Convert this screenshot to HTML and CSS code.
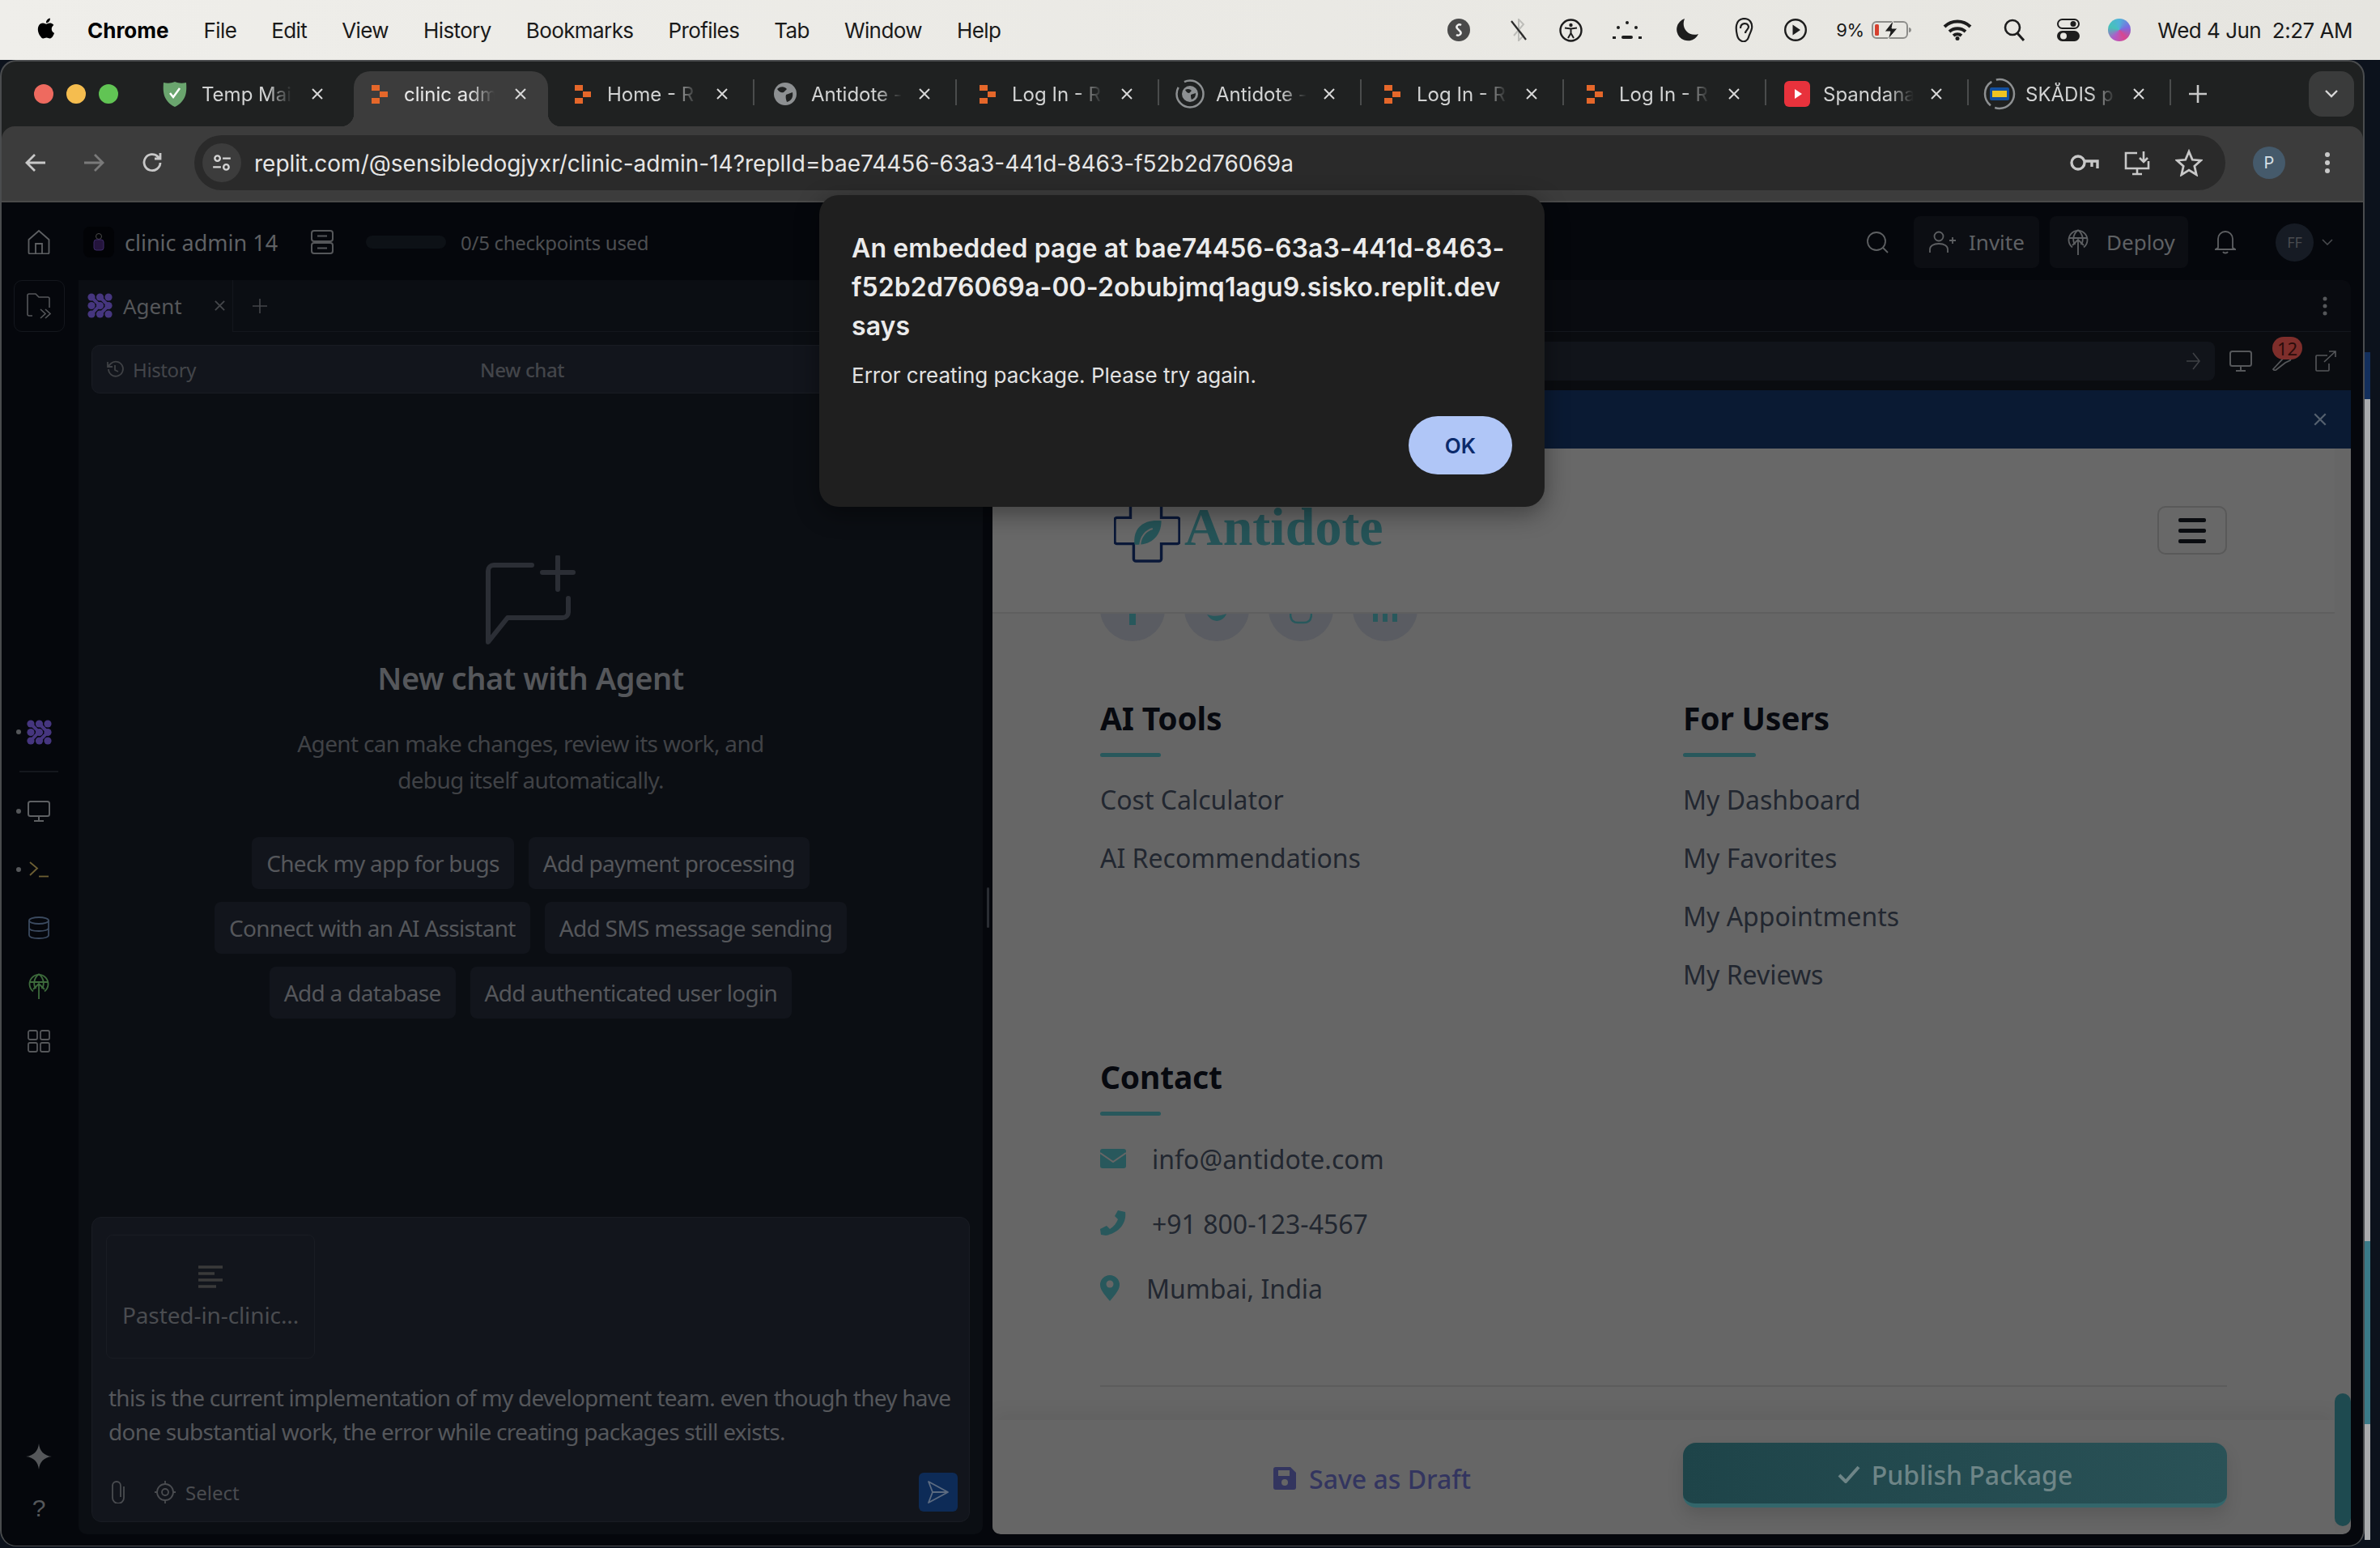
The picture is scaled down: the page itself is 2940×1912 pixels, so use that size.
FILE: index.html
```html
<!DOCTYPE html>
<html>
<head>
<meta charset="utf-8">
<title>clinic admin 14</title>
<link rel="stylesheet" href="styles.css">
</head>
<body>

<svg width="0" height="0" class="defs">
  <symbol id="replit" viewBox="0 0 20 23"><path fill="#e5672a" d="M0 0h10v7H0zM10 8h10v7H10zM0 16h10v7H0z"/></symbol>
  <symbol id="close" viewBox="0 0 16 16"><path d="M2 2l12 12M14 2L2 14" fill="none" stroke="currentColor" stroke-width="2"/></symbol>
  <symbol id="agent" viewBox="0 0 31 31"><g fill="#46367f"><circle cx="5" cy="5" r="4.600"/><circle cx="15.500" cy="5" r="4.600"/><circle cx="26" cy="5" r="4.600"/><circle cx="5" cy="15.500" r="4.600"/><circle cx="15.500" cy="15.500" r="4.600"/><circle cx="26" cy="15.500" r="4.600"/><circle cx="5" cy="26" r="4.600"/><circle cx="15.500" cy="26" r="4.600"/><circle cx="26" cy="26" r="4.600"/></g><path d="M5 5l10 10L5 26M15.500 5L26 15.500 15.500 26" fill="none" stroke="#46367f" stroke-width="4"/></symbol>
  <symbol id="monitor" viewBox="0 0 28 26"><rect x="1" y="1" width="26" height="18" rx="2.500" fill="none" stroke="currentColor" stroke-width="2"/><path d="M14 19v6M8 25h12" fill="none" stroke="currentColor" stroke-width="2"/></symbol>
  <symbol id="deploy" viewBox="0 0 26 32"><g fill="none" stroke="currentColor" stroke-width="1.800"><path d="M6 22.500A11.500 11.500 0 1 1 20 22.500"/><path d="M13 1c-7 6-7 14-3.500 18M13 1c7 6 7 14 3.500 18M2 11h22"/><path d="M13 32V13M6 20l7-7 7 7"/></g></symbol>
</svg>

<header class="menubar">
  <svg class="apple" viewBox="0 0 24 24"><path d="M18.710 19.500c-.83 1.240-1.710 2.450-3.050 2.470-1.340.03-1.770-.79-3.290-.79-1.530 0-2 .77-3.270.82-1.310.05-2.300-1.320-3.140-2.530C4.250 17 2.940 12.450 4.700 9.390c.87-1.520 2.430-2.480 4.120-2.510 1.280-.02 2.500.87 3.290.87.78 0 2.260-1.070 3.810-.91.65.03 2.470.26 3.640 1.980-.09.06-2.170 1.280-2.150 3.810.03 3.020 2.650 4.030 2.680 4.040-.03.07-.42 1.440-1.380 2.830M13 3.500c.73-.83 1.940-1.460 2.940-1.500.13 1.170-.34 2.350-1.040 3.190-.69.85-1.830 1.510-2.950 1.420-.15-1.150.41-2.350 1.050-3.110z"/></svg>
  <nav class="menus">
    <b>Chrome</b><span>File</span><span>Edit</span><span>View</span><span>History</span><span>Bookmarks</span><span>Profiles</span><span>Tab</span><span>Window</span><span>Help</span>
  </nav>
  <div class="status">
    <svg class="st-shazam" viewBox="0 0 28 28"><circle cx="14" cy="14" r="14" fill="#4a4a4a"/><path d="M17 8c-3-2-7 1-5 4l4 4c2 3-2 6-5 4" fill="none" stroke="#eee" stroke-width="2.500"/></svg>
    <svg class="st-bt" viewBox="0 0 26 28"><path d="M7 7l12 14-6 6V1l6 6L7 21" fill="none" stroke="#bdbdb9" stroke-width="2"/><path d="M4 3l18 23" stroke="#2b2b2b" stroke-width="2.200"/></svg>
    <svg class="st-acc" viewBox="0 0 29 29"><circle cx="14.500" cy="14.500" r="13" fill="none" stroke="#1d1d1d" stroke-width="2.400"/><circle cx="14.500" cy="8" r="2.200" fill="#1d1d1d"/><path d="M7 11.500l7.500 1 7.500-1M14.500 12v6l-3.500 6M14.500 18l3.500 6" fill="none" stroke="#1d1d1d" stroke-width="2"/></svg>
    <svg class="st-dots" viewBox="0 0 38 28"><g fill="#1d1d1d"><circle cx="19" cy="5" r="2"/><circle cx="30" cy="11" r="2"/><circle cx="8" cy="11" r="2"/><rect x="1" y="22" width="4" height="3"/><rect x="33" y="22" width="4" height="3"/><rect x="12" y="21" width="14" height="4" rx="2"/></g></svg>
    <svg class="st-moon" viewBox="0 0 28 28"><path d="M11 0a14 14 0 1 0 17 19C16 23 6 12 11 0z" fill="#1d1d1d"/></svg>
    <svg class="st-ear" viewBox="0 0 23 30"><path d="M3 22C1 14 0 2 11 1c8 0 11 6 10 12-1 5-3 7-4 11-1 4-5 6-8 5-3-1-5-3-6-7zM7 13c0-7 9-8 10-2 0 4-4 4-4 8" fill="none" stroke="#1d1d1d" stroke-width="2.200"/></svg>
    <svg class="st-play" viewBox="0 0 28 28"><circle cx="14" cy="14" r="12.800" fill="none" stroke="#1d1d1d" stroke-width="2.400"/><path d="M10.500 7.500l9.500 6.500-9.500 6.500z" fill="#1d1d1d"/></svg>
    <span class="st-pct">9%</span>
    <svg class="st-bat" viewBox="0 0 49 24"><rect x="1" y="2" width="43" height="20" rx="5" fill="none" stroke="#8d8d8a" stroke-width="2"/><rect x="4" y="5" width="5" height="14" rx="1.500" fill="#d6402e"/><path d="M46 9v6c2 0 3-1.500 3-3s-1-3-3-3z" fill="#8d8d8a"/><path d="M27 0L16 14h7l-3 10 12-14h-7z" fill="#1d1d1d" stroke="#e8e7e2"/></svg>
    <svg class="st-wifi" viewBox="0 0 36 26"><path d="M2 9a23 23 0 0 1 32 0M8 15a15 15 0 0 1 20 0M13 20a8 8 0 0 1 10 0" fill="none" stroke="#1d1d1d" stroke-width="4"/><circle cx="18" cy="23.500" r="2.500" fill="#1d1d1d"/></svg>
    <svg class="st-search" viewBox="0 0 26 28"><circle cx="11" cy="11" r="9" fill="none" stroke="#1d1d1d" stroke-width="2.600"/><path d="M17 18l8 9" stroke="#1d1d1d" stroke-width="3"/></svg>
    <svg class="st-ctrl" viewBox="0 0 28 28"><rect x="1" y="1" width="26" height="11" rx="5.500" fill="none" stroke="#1d1d1d" stroke-width="2"/><circle cx="20" cy="6.500" r="3.500" fill="#1d1d1d"/><rect y="15" width="28" height="13" rx="6.500" fill="#1d1d1d"/><circle cx="8" cy="21.500" r="4" fill="#e8e7e2"/></svg>
    <span class="st-siri"></span>
    <span class="st-date">Wed 4 Jun&nbsp;&nbsp;2:27 AM</span>
  </div>
</header>

<main class="desktop">
  <div class="back-window"><i class="bw-blue"></i><i class="bw-grey"></i><i class="bw-teal"></i><i class="bw-grey2"></i></div>

  <section class="window">
    <div class="tabstrip">
      <div class="lights"><i class="red"></i><i class="yellow"></i><i class="green"></i></div>
      <div class="tabs">
        <div class="tab nosep">
          <svg class="fav fav-shield" viewBox="0 0 32 32"><path d="M2 2c5 1 9 1 14-1 5 2 9 2 14 1 1 12 0 23-14 30C2 25 1 14 2 2z" fill="#6aa56e"/><path d="M10 15l4 5 8-11" fill="none" stroke="#fff" stroke-width="2.500"/></svg>
          <span class="tab-text">Temp Mai</span><svg class="tab-x"><use href="#close"/></svg>
        </div>
        <div class="tab active">
          <svg class="fav"><use href="#replit"/></svg>
          <span class="tab-text">clinic adm</span><svg class="tab-x"><use href="#close"/></svg>
        </div>
        <div class="tab">
          <svg class="fav"><use href="#replit"/></svg>
          <span class="tab-text">Home - R</span><svg class="tab-x"><use href="#close"/></svg>
        </div>
        <div class="tab">
          <svg class="fav fav-globe" viewBox="0 0 28 28"><circle cx="14" cy="14" r="14" fill="#8d9092"/><path d="M4 8c5-4 9-3 12 0l-4 4c-3 1-5 0-8-4zM15 15l8-3c1 6-1 10-7 12-1-3-2-6-1-9z" fill="#1f2121"/></svg>
          <span class="tab-text">Antidote -</span><svg class="tab-x"><use href="#close"/></svg>
        </div>
        <div class="tab">
          <svg class="fav"><use href="#replit"/></svg>
          <span class="tab-text">Log In - R</span><svg class="tab-x"><use href="#close"/></svg>
        </div>
        <div class="tab">
          <svg class="fav fav-loading" viewBox="0 0 36 36"><circle cx="18" cy="18" r="16.500" fill="none" stroke="#8d9092" stroke-width="2.500" stroke-dasharray="60 10"/><circle cx="18" cy="18" r="10" fill="#8d9092"/><path d="M12 13c4-2 6-1 8 1l-3 3c-2 0-3-1-5-4zM19 19l6-2c0 4-1 6-5 8-1-2-1-4-1-6z" fill="#1f2121"/></svg>
          <span class="tab-text">Antidote -</span><svg class="tab-x"><use href="#close"/></svg>
        </div>
        <div class="tab">
          <svg class="fav"><use href="#replit"/></svg>
          <span class="tab-text">Log In - R</span><svg class="tab-x"><use href="#close"/></svg>
        </div>
        <div class="tab">
          <svg class="fav"><use href="#replit"/></svg>
          <span class="tab-text">Log In - R</span><svg class="tab-x"><use href="#close"/></svg>
        </div>
        <div class="tab">
          <svg class="fav fav-yt" viewBox="0 0 32 32"><rect width="32" height="32" rx="6" fill="#e8323c"/><path d="M13 10l9 6-9 6z" fill="#fff"/></svg>
          <span class="tab-text">Spandana</span><svg class="tab-x"><use href="#close"/></svg>
        </div>
        <div class="tab">
          <svg class="fav fav-ikea" viewBox="0 0 40 40"><circle cx="20" cy="20" r="18" fill="none" stroke="#8d9092" stroke-width="2.500" stroke-dasharray="34 6"/><rect x="8" y="12" width="24" height="16" rx="2" fill="#14509e"/><rect x="11" y="16" width="18" height="8" fill="#f0c420"/></svg>
          <span class="tab-text">SKÅDIS p</span><svg class="tab-x"><use href="#close"/></svg>
        </div>
      </div>
      <svg class="newtab" viewBox="0 0 22 22"><path d="M11 0v22M0 11h22" stroke="#c8c8c8" stroke-width="2.600"/></svg>
      <div class="tabsearch"><svg viewBox="0 0 16 10"><path d="M1 1l7 7 7-7" fill="none" stroke="#d8d8d8" stroke-width="2.400"/></svg></div>
    </div>

    <div class="toolbar">
      <svg class="tb-icon" viewBox="0 0 28 28"><path d="M26 14H4M13 4L3 14l10 10" fill="none" stroke="#c8c8c8" stroke-width="2.800"/></svg>
      <svg class="tb-icon" viewBox="0 0 28 28"><path d="M2 14h22M15 4l10 10-10 10" fill="none" stroke="#7a7a7a" stroke-width="2.800"/></svg>
      <svg class="tb-icon" viewBox="0 0 28 28"><path d="M24 14a10 10 0 1 1-3-7.500L24 9M24 2v7h-7" fill="none" stroke="#c8c8c8" stroke-width="2.800"/></svg>
      <div class="omnibox">
        <span class="site-info"><svg viewBox="0 0 24 24"><g fill="none" stroke="#d4d4d4" stroke-width="2.200"><circle cx="7" cy="7" r="3"/><path d="M13 7h9M2 17h9"/><circle cx="17" cy="17" r="3"/></g></svg></span>
        <span class="url">replit.com/@sensibledogjyxr/clinic-admin-14?replId=bae74456-63a3-441d-8463-f52b2d76069a</span>
        <svg class="om-key" viewBox="0 0 36 26"><g fill="none" stroke="#c8c8c8" stroke-width="3.400"><circle cx="10" cy="13" r="8"/><path d="M18 11h16v9M27 11v7"/></g></svg>
        <svg class="om-install" viewBox="0 0 32 32"><g fill="none" stroke="#c8c8c8" stroke-width="2.600"><path d="M16 4H2v19h28v-9"/><path d="M24 2v13M19 10l5 5 5-5"/><path d="M16 23v7M10 30h12"/></g></svg>
        <svg class="om-star" viewBox="0 0 32 32"><path d="M16 3l4 9.500 10 .8-7.600 6.600 2.300 10L16 24.600 7.300 30l2.300-10L2 13.300l10-.8z" fill="none" stroke="#c8c8c8" stroke-width="2.600"/></svg>
      </div>
      <span class="profile">P</span>
      <svg class="tb-more" viewBox="0 0 6 26"><g fill="#c8c8c8"><circle cx="3" cy="3" r="3"/><circle cx="3" cy="13" r="3"/><circle cx="3" cy="23" r="3"/></g></svg>
    </div>

    <div class="app">
      <div class="appbar">
        <svg class="home" viewBox="0 0 28 30"><path d="M1.500 12L14 1l12.500 11v16a1.500 1.500 0 0 1-1.500 1.500H3A1.500 1.500 0 0 1 1.500 28zM10 29.500V17h8v12.500" fill="none" stroke="#5e6063" stroke-width="1.800"/></svg>
        <span class="proj-icon"><svg viewBox="0 0 16 24"><circle cx="8" cy="5" r="3.500" fill="none" stroke="#4a4a4a"/><rect x="2" y="9" width="12" height="13" rx="3" fill="#24143c" stroke="#3c2a66"/></svg></span>
        <span class="proj-name">clinic admin 14</span>
        <svg class="proj-db" viewBox="0 0 28 30"><g fill="none" stroke="#55575a" stroke-width="2"><rect x="1" y="1" width="26" height="13" rx="3"/><rect x="1" y="16" width="26" height="13" rx="3"/><path d="M8 7.500h12M8 22.500h12"/></g></svg>
        <span class="progress"></span>
        <span class="checkpoints">0/5 checkpoints used</span>
        <div class="appbar-right">
          <svg class="ab-search" viewBox="0 0 28 28"><circle cx="13" cy="13" r="11" fill="none" stroke="#5e6063" stroke-width="1.800"/><path d="M21 21l6 6" stroke="#5e6063" stroke-width="1.800"/></svg>
          <span class="ab-btn ab-invite"><svg viewBox="0 0 34 28"><g fill="none" stroke="#5e6063" stroke-width="1.800"><circle cx="13" cy="7" r="5.500"/><path d="M2 27v-4c0-4 4-7 11-7s11 3 11 7v4M26 12h8M30 8v8"/></g></svg>Invite</span>
          <span class="ab-btn ab-deploy"><svg class="deploy-i"><use href="#deploy"/></svg>Deploy</span>
          <svg class="ab-bell" viewBox="0 0 26 30"><path d="M4 22V11a9 9 0 0 1 18 0v11l3 2H1zM10 27c1 2 5 2 6 0" fill="none" stroke="#5e6063" stroke-width="1.800"/></svg>
          <span class="ab-avatar">FF</span>
          <svg class="ab-chev" viewBox="0 0 14 8"><path d="M1 1l6 6 6-6" fill="none" stroke="#4a4c50" stroke-width="1.500"/></svg>
        </div>
      </div>

      <div class="appbody">
        <aside class="rail">
          <div class="rail-folder"><svg viewBox="0 0 30 32"><path d="M7 28H3a2 2 0 0 1-2-2V3a2 2 0 0 1 2-2h8l4 4h11a2 2 0 0 1 2 2v11" fill="none" stroke="#55575a" stroke-width="1.600"/><path d="M17 20l6 5.500-6 5.500M23 20l6 5.500-6 5.500" fill="none" stroke="#55575a" stroke-width="1.600"/></svg></div>
          <div class="rail-group">
            <div class="rail-item"><i class="dot"></i><svg class="ri-agent"><use href="#agent"/></svg></div>
            <div class="rail-div"></div>
            <div class="rail-item"><i class="dot"></i><svg class="ri-monitor"><use href="#monitor"/></svg></div>
            <div class="rail-item"><i class="dot"></i><svg class="ri-term" viewBox="0 0 24 20"><path d="M1 1l9 7.500L1 17" fill="none" stroke="#6d5f34" stroke-width="1.800"/><path d="M12 18.500h12" stroke="#6d5f34" stroke-width="1.800"/></svg></div>
            <div class="rail-item"><svg class="ri-db" viewBox="0 0 26 28"><g fill="none" stroke="#3b4a5f" stroke-width="1.800"><ellipse cx="13" cy="5" rx="12" ry="4"/><path d="M1 5v18c0 2.500 5 4 12 4s12-1.500 12-4V5M1 14c0 2.500 5 4 12 4s12-1.500 12-4"/></g></svg></div>
            <div class="rail-item"><svg class="ri-deploy"><use href="#deploy"/></svg></div>
            <div class="rail-item last"><svg class="ri-grid" viewBox="0 0 28 28"><g fill="none" stroke="#55575a" stroke-width="1.800"><rect x="1" y="1" width="11" height="11" rx="2"/><rect x="16" y="1" width="11" height="11" rx="2"/><rect x="1" y="16" width="11" height="11" rx="2"/><rect x="16" y="16" width="11" height="11" rx="2"/></g></svg></div>
          </div>
          <div class="rail-bottom">
            <div class="rail-item"><svg class="ri-spark" viewBox="0 0 32 32"><path d="M16 0c1 9 6 15 16 16-10 1-15 7-16 16-1-9-6-15-16-16 10-1 15-7 16-16z" fill="#55575a"/></svg></div>
            <div class="rail-item ri-help">?</div>
          </div>
        </aside>

        <section class="chat">
          <div class="panel-head">
            <div class="panel-tab"><svg class="agent-i"><use href="#agent"/></svg><span>Agent</span><svg class="pt-x"><use href="#close"/></svg></div>
            <svg class="pt-plus" viewBox="0 0 18 18"><path d="M9 0v18M0 9h18" stroke="#44464a" stroke-width="1.600"/></svg>
          </div>
          <div class="historybar">
            <span class="hist"><svg viewBox="0 0 24 24"><path d="M4 12a9 9 0 1 0 3-7L3 9M3 3v6h6M12 7v6l4 2" fill="none" stroke="#3f4145" stroke-width="1.800"/></svg>History</span>
            <span class="newchat">New chat</span>
          </div>
          <div class="empty">
            <svg class="empty-icon" viewBox="0 0 111 110"><path d="M57 12H10A7 7 0 0 0 3 19v88l24-30h68a7 7 0 0 0 7-7V53" fill="none" stroke="#2b2e35" stroke-width="6" stroke-linecap="round" stroke-linejoin="round"/><path d="M89 2v40M70 21h38" stroke="#2b2e35" stroke-width="6" stroke-linecap="round"/></svg>
            <h2>New chat with Agent</h2>
            <p>Agent can make changes, review its work, and<br>debug itself automatically.</p>
            <div class="chips">
              <div class="chip-row"><span class="chip">Check my app for bugs</span><span class="chip">Add payment processing</span></div>
              <div class="chip-row"><span class="chip">Connect with an AI Assistant</span><span class="chip">Add SMS message sending</span></div>
              <div class="chip-row"><span class="chip">Add a database</span><span class="chip">Add authenticated user login</span></div>
            </div>
          </div>
          <div class="composer">
            <div class="attachment">
              <svg viewBox="0 0 30 28"><path d="M0 2h30M0 10h20M0 18h30M0 26h22" stroke="#3a3a3a" stroke-width="3.500"/></svg>
              <span>Pasted-in-clinic...</span>
            </div>
            <div class="message">this is the current implementation of my development team. even though they have done substantial work, the error while creating packages still exists.</div>
            <div class="composer-foot">
              <svg class="clip" viewBox="0 0 20 28"><path d="M17 7v14a7 7 0 0 1-14 0V6a5 5 0 0 1 10 0v14" fill="none" stroke="#4a4c50" stroke-width="1.800"/></svg>
              <span class="select"><svg viewBox="0 0 26 28"><g fill="none" stroke="#4a4c50" stroke-width="1.800"><circle cx="13" cy="14" r="10"/><circle cx="13" cy="14" r="4"/><path d="M13 0v4M13 24v4M0 14h3M23 14h3"/></g></svg>Select</span>
              <span class="send"><svg viewBox="0 0 28 30"><path d="M2 2l24 13L2 28l5-13zM7 15h19" fill="none" stroke="#5c6b80" stroke-width="1.800" stroke-linejoin="round"/></svg></span>
            </div>
          </div>
        </section>

        <div class="resizer"><i></i></div>

        <section class="preview">
          <div class="preview-head"><svg class="ph-more" viewBox="0 0 6 24"><g fill="#55575a"><circle cx="3" cy="3" r="2.500"/><circle cx="3" cy="12" r="2.500"/><circle cx="3" cy="21" r="2.500"/></g></svg></div>
          <div class="preview-url">
            <div class="urlbox"><svg viewBox="0 0 18 26"><path d="M1 13h15M9 3l8 10-8 10" fill="none" stroke="#3f4145" stroke-width="1.600"/></svg></div>
            <svg class="pu-monitor"><use href="#monitor"/></svg>
            <span class="pu-wrench"><svg viewBox="0 0 28 24"><path d="M2 22l14-15 6-4 4 2-3 6-6 3L4 24z" fill="none" stroke="#55575a" stroke-width="1.800"/></svg><em class="badge">12</em></span>
            <svg class="pu-open" viewBox="0 0 26 26"><path d="M15 6H2a1 1 0 0 0-1 1v17a1 1 0 0 0 1 1h14a1 1 0 0 0 1-1v-8M11 14L25 1M17 1h8v7" fill="none" stroke="#55575a" stroke-width="1.600"/></svg>
          </div>
          <div class="banner"><svg class="banner-x"><use href="#close"/></svg></div>
          <div class="frame">
            <div class="site">
              <div class="site-head">
                <div class="logo">
                  <svg viewBox="0 0 84 84"><path d="M24 3h33a3 3 0 0 1 3 3v20h20a3 3 0 0 1 3 3v27a3 3 0 0 1-3 3H60v19a3 3 0 0 1-3 3H28a3 3 0 0 1-3-3V59H4a3 3 0 0 1-3-3V29a3 3 0 0 1 3-3h17V6a3 3 0 0 1 3-3z" fill="none" stroke="#0a1838" stroke-width="3.500"/><path d="M26 60C24 38 38 28 60 30 60 50 46 62 26 60z" fill="#255357"/><path d="M33 62c0-12 8-20 16-22" fill="none" stroke="#666" stroke-width="2"/></svg>
                  <span>Antidote</span>
                </div>
                <div class="burger"><i></i><i></i><i></i></div>
              </div>
              <div class="socials">
                <span class="social"><svg viewBox="0 0 8 14"><path d="M0 0h8v14H0z" fill="#28585c"/></svg></span>
                <span class="social"><svg class="tw" viewBox="0 0 24 14"><path d="M0 1c8 3 16 2 24-1-3 9-16 14-24 1z" fill="#28585c"/></svg></span>
                <span class="social"><svg class="ig" viewBox="0 0 28 14"><path d="M1 0c0 8 4 11 9 11h8c5 0 9-3 9-11" fill="none" stroke="#28585c" stroke-width="2.500"/></svg></span>
                <span class="social"><svg class="li" viewBox="0 0 30 14"><path d="M0 0h6v10H0zM12 0h6v10h-6zM24 0h6v10h-6z" fill="#28585c"/></svg></span>
              </div>
              <div class="foot-grid">
                <div>
                  <h3>AI Tools</h3>
                  <ul><li>Cost Calculator</li><li>AI Recommendations</li></ul>
                </div>
                <div>
                  <h3>For Users</h3>
                  <ul><li>My Dashboard</li><li>My Favorites</li><li>My Appointments</li><li>My Reviews</li></ul>
                </div>
              </div>
              <div class="contact">
                <h3>Contact</h3>
                <div class="c-row"><svg class="c-mail" viewBox="0 0 32 24"><rect width="32" height="24" rx="3" fill="#28585c"/><path d="M0 5l16 11L32 5" fill="none" stroke="#666" stroke-width="2"/></svg>info@antidote.com</div>
                <div class="c-row"><svg class="c-phone" viewBox="0 0 32 32"><path d="M22 0l9 2c2 14-8 26-24 29l-6-1-1-7 8-4 4 4c5-3 8-7 10-12l-4-4z" fill="#28585c"/></svg>+91 800-123-4567</div>
                <div class="c-row c-pin"><svg viewBox="0 0 24 32"><path d="M12 0a12 12 0 0 1 12 12c0 7-8 15-12 20C8 27 0 19 0 12A12 12 0 0 1 12 0z" fill="#28585c"/><circle cx="12" cy="11" r="4.500" fill="#666"/></svg>Mumbai, India</div>
              </div>
              <div class="foot-rule"></div>
              <div class="actions">
                <span class="draft"><svg viewBox="0 0 28 28"><path d="M3 0h18l7 7v18a3 3 0 0 1-3 3H3a3 3 0 0 1-3-3V3a3 3 0 0 1 3-3z" fill="#33355f"/><rect x="6" y="4" width="14" height="7" fill="#666"/><circle cx="14" cy="19" r="4" fill="#666"/></svg>Save as Draft</span>
                <span class="publish"><svg viewBox="0 0 28 22"><path d="M2 12l8 8L26 2" fill="none" stroke="#6e8587" stroke-width="4"/></svg>Publish Package</span>
              </div>
            </div>
            <div class="site-scroll"><i></i></div>
          </div>
        </section>
      </div>
    </div>
  </section>

  <div class="dialog">
    <h1>An embedded page at bae74456-63a3-441d-8463-<br>f52b2d76069a-00-2obubjmq1agu9.sisko.replit.dev<br>says</h1>
    <p>Error creating package. Please try again.</p>
    <div class="dialog-foot"><button class="ok">OK</button></div>
  </div>
</main>

</body>
</html>
```

FILE: styles.css
```css
* { box-sizing: border-box; }

html, body {
	margin: 0;
	padding: 0;
	width: 2940px;
	height: 1912px;
	overflow: hidden;
	background: #0c121c;
	font-family: "Inter", sans-serif;
}

.defs { position: absolute; }
svg { display: block; flex: none; }
i, em { display: block; font-style: normal; }

/* mac menu bar */
.menubar {
	height: 74px;
	display: flex;
	align-items: center;
	padding: 0 34px 0 42px;
	background: linear-gradient(90deg, #efeeea, #e6e5e0);
	color: #1a1a1a;
	font-size: 26px;
}
.apple { width: 30px; height: 34px; margin-top: -4px; }
.menus { display: flex; gap: 43px; margin-left: 36px; align-items: center; letter-spacing: -.6px; }
.menus b { font-weight: 700; color: #000; letter-spacing: 0; }

.status { margin-left: auto; display: flex; align-items: center; }
.st-shazam { width: 28px; height: 28px; }
.st-bt { width: 26px; height: 28px; margin-left: 47px; }
.st-acc { width: 29px; height: 29px; margin-left: 37px; }
.st-dots { width: 38px; height: 28px; margin-left: 36px; }
.st-moon { width: 28px; height: 28px; margin-left: 41px; }
.st-ear { width: 23px; height: 30px; margin-left: 45px; }
.st-play { width: 28px; height: 28px; margin-left: 38px; }
.st-pct { margin-left: 36px; font-size: 22px; width: 34px; white-space: nowrap; letter-spacing: -.5px; }
.st-bat { width: 49px; height: 24px; margin-left: 10px; }
.st-wifi { width: 36px; height: 26px; margin-left: 39px; }
.st-search { width: 26px; height: 28px; margin-left: 39px; }
.st-ctrl { width: 28px; height: 28px; margin-left: 40px; }
.st-siri {
	display: block;
	width: 28px;
	height: 28px;
	margin-left: 35px;
	border-radius: 50%;
	background: conic-gradient(#4fb3d9, #7b6be0, #d8478f, #b05bc8, #46c2b8, #4fb3d9);
}
.st-date { margin-left: 33px; white-space: nowrap; font-size: 26px; letter-spacing: -.5px; }

/* desktop and windows */
.desktop { position: relative; height: 1838px; }
.back-window {
	position: absolute;
	right: 0;
	top: 0;
	bottom: 0;
	width: 40px;
	background: #0c121c;
}
.back-window i { position: absolute; left: 21px; width: 7px; }
.bw-blue { top: 361px; height: 58px; background: #132f5c; }
.bw-grey { top: 419px; height: 1040px; background: #a9abad; }
.bw-teal { top: 1459px; height: 226px; background: #3a7a88; }
.bw-grey2 { top: 1685px; height: 143px; background: #a9abad; }

.window {
	position: relative;
	width: 2921px;
	height: 1836px;
	display: flex;
	flex-direction: column;
	background: #1f2121;
	border: 2px solid #4a4c4e;
	border-bottom-width: 1px;
	border-radius: 20px;
	overflow: hidden;
}

/* tab strip */
.tabstrip { height: 80px; display: flex; align-items: flex-end; position: relative; flex: none; }
.lights { display: flex; gap: 16px; width: 180px; padding: 0 0 28px 40px; }
.lights i { width: 24px; height: 24px; border-radius: 50%; }
.red { background: #ee6a5f; }
.yellow { background: #f5bd4f; }
.green { background: #61c454; }

.tabs { display: flex; height: 68px; }
.tab {
	position: relative;
	width: 250px;
	height: 68px;
	display: flex;
	align-items: center;
	padding: 0 32px 12px 28px;
	color: #d2d3d3;
	font-size: 24px;
}
.tab::after {
	content: "";
	position: absolute;
	right: 0;
	top: 10px;
	width: 2px;
	height: 32px;
	background: #4a4c4c;
}
.tab.nosep::after, .tab.active::after { display: none; }
.tab.active {
	color: #e8e8e8;
	background: #3c3c3c;
	width: 240px;
	margin: 0 5px;
	padding: 0 26px 12px 22px;
	border-radius: 20px 20px 0 0;
}
.tab.active::before {
	content: "";
	position: absolute;
	left: -16px;
	right: -16px;
	bottom: 0;
	height: 16px;
	background:
		radial-gradient(circle at 0 0, #1f2121 16px, #3c3c3c 16.500px) left / 16px 16px no-repeat,
		radial-gradient(circle at 100% 0, #1f2121 16px, #3c3c3c 16.500px) right / 16px 16px no-repeat;
}
.fav { width: 20px; height: 23px; margin-right: 20px; }
.fav-shield { width: 32px; height: 32px; margin: 0 17px 0 -10px; }
.fav-globe { width: 28px; height: 28px; margin: 0 18px 0 -4px; }
.fav-loading { width: 36px; height: 36px; margin: 0 14px 0 -8px; }
.fav-yt { width: 32px; height: 32px; margin: 0 16px 0 -6px; }
.fav-ikea { width: 40px; height: 40px; margin: 0 12px 0 -10px; }
.tab-text {
	width: 112px;
	white-space: nowrap;
	-webkit-mask-image: linear-gradient(90deg, #000 72%, transparent 100%);
	mask-image: linear-gradient(90deg, #000 72%, transparent 100%);
}
.tab-x { width: 16px; height: 16px; margin-left: auto; color: #d8d8d8; }

.newtab { width: 22px; height: 22px; margin: 0 0 29px 22px; }
.tabsearch {
	position: absolute;
	left: 2850px;
	top: 12px;
	width: 56px;
	height: 56px;
	border-radius: 16px;
	background: #3a3b3b;
	display: flex;
	align-items: center;
	justify-content: center;
}
.tabsearch svg { width: 16px; height: 10px; }

/* toolbar */
.toolbar {
	height: 94px;
	flex: none;
	display: flex;
	align-items: center;
	gap: 44px;
	padding: 0 0 2px 28px;
	background: #3c3c3c;
	border-bottom: 2px solid #4a4a4a;
	border-radius: 16px 16px 0 0;
}
.tb-icon { width: 28px; height: 28px; }
.omnibox {
	width: 2509px;
	height: 68px;
	margin-left: -6px;
	border-radius: 34px;
	background: #2a2a2a;
	display: flex;
	align-items: center;
	padding: 0 28px 0 10px;
}
.site-info {
	display: flex;
	align-items: center;
	justify-content: center;
	width: 48px;
	height: 48px;
	border-radius: 50%;
	background: #3c3c3c;
}
.site-info svg { width: 26px; height: 26px; }
.url {
	flex: 1;
	margin-left: 16px;
	padding-top: 2px;
	color: #e6e6e6;
	font-size: 28px;
	white-space: nowrap;
}
.om-key { width: 36px; height: 26px; }
.om-install { width: 32px; height: 32px; margin-left: 31px; }
.om-star { width: 34px; height: 34px; margin-left: 31px; }
.profile {
	width: 40px;
	height: 40px;
	margin-left: -10px;
	border-radius: 50%;
	background: #455a6b;
	color: #d8e0e6;
	font-size: 20px;
	display: flex;
	align-items: center;
	justify-content: center;
}
.tb-more { width: 6px; height: 26px; margin-left: 5px; }

/* replit shell */
.app {
	flex: 1;
	min-height: 0;
	display: flex;
	flex-direction: column;
	background: #05070c;
	font-family: "Noto Sans", sans-serif;
}
.appbar { height: 96px; flex: none; display: flex; align-items: center; padding: 2px 37px 0 32px; color: #5f6164; font-size: 26px; }
.home { width: 28px; height: 30px; }
.proj-icon {
	width: 38px;
	height: 38px;
	margin-left: 41px;
	border-radius: 8px;
	background: #020306;
	display: flex;
	align-items: center;
	justify-content: center;
}
.proj-icon svg { width: 16px; height: 24px; }
.proj-name { margin-left: 13px; font-size: 27px; }
.proj-db { width: 28px; height: 30px; margin-left: 41px; }
.progress { width: 99px; height: 16px; margin-left: 40px; border-radius: 8px; background: #0d1116; }
.checkpoints { margin-left: 18px; font-size: 24px; color: #4d4f52; letter-spacing: -.3px; }
.appbar-right { margin-left: auto; display: flex; align-items: center; }
.ab-search { width: 28px; height: 28px; }
.ab-btn {
	height: 64px;
	display: flex;
	align-items: center;
	border-radius: 8px;
	background: #0c0e13;
}
.ab-invite { width: 155px; margin-left: 31px; padding-left: 18px; gap: 16px; }
.ab-invite svg { width: 34px; height: 28px; }
.ab-deploy { width: 171px; margin-left: 13px; padding-left: 22px; gap: 22px; }
.deploy-i { width: 26px; height: 32px; color: #5e6063; }
.ab-bell { width: 26px; height: 30px; margin-left: 33px; }
.ab-avatar {
	width: 47px;
	height: 47px;
	margin-left: 49px;
	border-radius: 50%;
	background: #161b24;
	color: #4a4c50;
	font-size: 18px;
	display: flex;
	align-items: center;
	justify-content: center;
}
.ab-chev { width: 14px; height: 8px; margin-left: 10px; }

.appbody { flex: 1; min-height: 0; display: flex; padding-bottom: 14px; }

/* left rail */
.rail { width: 95px; flex: none; display: flex; flex-direction: column; align-items: center; padding-right: 3px; }
.rail-folder {
	width: 63px;
	height: 64px;
	border: 1px solid #14171d;
	border-radius: 10px;
	display: flex;
	align-items: center;
	justify-content: center;
}
.rail-folder svg { width: 30px; height: 32px; }
.rail-group { margin-top: 458px; width: 100%; }
.rail-item {
	position: relative;
	height: 72px;
	display: flex;
	align-items: center;
	justify-content: center;
}
.rail-item.last { height: 64px; }
.dot { position: absolute; left: 18px; width: 6px; height: 6px; border-radius: 50%; background: #55575a; }
.rail-div { height: 2px; width: 48px; margin: 12px 0 12px 22px; background: #14171d; }
.ri-agent { width: 31px; height: 31px; }
.ri-monitor { width: 28px; height: 26px; color: #5e6063; }
.ri-term { width: 24px; height: 20px; }
.ri-db { width: 26px; height: 28px; }
.ri-deploy { width: 26px; height: 32px; color: #3d6b3c; }
.ri-grid { width: 28px; height: 28px; }
.rail-bottom { margin-top: auto; width: 100%; }
.rail-bottom .rail-item { height: 64px; }
.ri-spark { width: 32px; height: 32px; }
.ri-help { color: #55575a; font-size: 30px; font-family: "Liberation Sans", sans-serif; }

/* chat panel */
.chat {
	width: 1117px;
	flex: none;
	display: flex;
	flex-direction: column;
	background: #0b0e13;
	border-radius: 10px;
	padding: 0 16px 15px;
}
.panel-head {
	height: 64px;
	flex: none;
	margin: 0 -16px;
	display: flex;
	align-items: center;
	border-bottom: 1px solid #14171d;
}
.panel-tab {
	width: 191px;
	height: 64px;
	display: flex;
	align-items: center;
	padding-left: 11px;
	border-right: 1px solid #14171d;
	background: #0b0e13;
	color: #55575a;
	font-size: 26px;
}
.agent-i { width: 31px; height: 31px; }
.panel-tab span { margin-left: 13px; }
.pt-x { width: 15px; height: 15px; margin-left: 39px; color: #44464a; }
.pt-plus { width: 18px; height: 18px; margin-left: 24px; }

.historybar {
	height: 60px;
	flex: none;
	margin-top: 16px;
	display: flex;
	align-items: center;
	padding-left: 16px;
	background: #12151c;
	border: 1px solid #191c23;
	border-radius: 10px;
	font-size: 24px;
	letter-spacing: -.4px;
	color: #43454a;
}
.hist { display: flex; align-items: center; gap: 10px; width: 463px; }
.hist svg { width: 24px; height: 24px; }
.newchat { font-weight: 500; }

.empty { flex: 1; text-align: center; padding-top: 200px; }
.empty-icon { width: 111px; height: 110px; margin: 0 auto; }
.empty h2 { margin: 17px 0 0; font-size: 38px; line-height: 48px; font-weight: 600; letter-spacing: -.45px; color: #55575b; }
.empty p { margin: 35px 0 0; font-size: 28px; line-height: 45px; letter-spacing: -.65px; color: #404246; }
.chips { margin-top: 48px; display: flex; flex-direction: column; gap: 16px; }
.chip-row { display: flex; justify-content: center; gap: 18px; }
.chip {
	height: 64px;
	padding: 0 18px;
	display: flex;
	align-items: center;
	border-radius: 8px;
	background: #12151c;
	color: #55575b;
	font-size: 28px;
	letter-spacing: -.7px;
}

.composer {
	flex: none;
	height: 377px;
	padding: 21px 17px 0;
	background: #12151c;
	border: 1px solid #191c23;
	border-radius: 12px;
}
.attachment {
	width: 258px;
	height: 153px;
	padding-top: 37px;
	border: 1px solid #191c23;
	border-radius: 8px;
	display: flex;
	flex-direction: column;
	align-items: center;
	color: #4a4c50;
	font-size: 28px;
	letter-spacing: -.1px;
}
.attachment svg { width: 30px; height: 28px; }
.attachment span { margin-top: 14px; white-space: nowrap; }
.message {
	margin: 27px 0 0 3px;
	font-size: 28px;
	line-height: 42px;
	letter-spacing: -.75px;
	color: #55575b;
}
.composer-foot { margin: 30px 0 0 5px; display: flex; align-items: center; }
.clip { width: 20px; height: 28px; }
.select { margin-left: 35px; display: flex; align-items: center; gap: 12px; color: #4a4c50; font-size: 24px; }
.select svg { width: 26px; height: 28px; }
.send {
	margin-left: auto;
	margin-right: -3px;
	width: 48px;
	height: 48px;
	border-radius: 6px;
	background: #0d2b57;
	display: flex;
	align-items: center;
	justify-content: center;
}
.send svg { width: 28px; height: 30px; }

.resizer { width: 12px; flex: none; display: flex; justify-content: center; padding-top: 750px; }
.resizer i { width: 3px; height: 50px; border-radius: 2px; background: #2a2d33; }

/* preview panel */
.preview { width: 1678px; flex: none; display: flex; flex-direction: column; border-radius: 10px; overflow: hidden; }
.preview-head {
	height: 64px;
	flex: none;
	display: flex;
	align-items: center;
	justify-content: flex-end;
	padding-right: 29px;
	background: #090b10;
	border-bottom: 1px solid #14171d;
}
.ph-more { width: 6px; height: 24px; }
.preview-url { height: 72px; flex: none; display: flex; align-items: center; background: #0a0c10; padding-left: 14px; }
.urlbox {
	width: 1496px;
	height: 48px;
	border-radius: 8px;
	background: #11141a;
	display: flex;
	align-items: center;
	justify-content: flex-end;
	padding-right: 18px;
}
.urlbox svg { width: 18px; height: 26px; }
.pu-monitor { width: 28px; height: 26px; margin-left: 18px; color: #55575a; }
.pu-wrench { position: relative; display: block; width: 28px; height: 24px; margin-left: 24px; }
.pu-wrench svg { width: 28px; height: 24px; }
.badge {
	position: absolute;
	left: 1px;
	top: -18px;
	width: 37px;
	height: 28px;
	border-radius: 14px;
	background: #7e2e2b;
	color: #2a0c0a;
	font-size: 22px;
	line-height: 28px;
	text-align: center;
}
.pu-open { width: 26px; height: 26px; margin-left: 26px; }
.banner {
	height: 72px;
	flex: none;
	display: flex;
	align-items: center;
	justify-content: flex-end;
	padding-right: 29px;
	background: #0a1a33;
}
.banner-x { width: 18px; height: 18px; color: #55606e; }

/* the site in the preview */
.frame { flex: 1; min-height: 0; display: flex; background: #666; overflow: hidden; font-family: "Noto Sans", sans-serif; }
.site { width: 1658px; flex: none; }
.site-head {
	height: 204px;
	display: flex;
	align-items: center;
	justify-content: space-between;
	padding: 0 133px 0 150px;
	background: #686868;
	border-bottom: 2px solid #5f5f5f;
}
.logo { display: flex; align-items: center; gap: 5px; }
.logo svg { width: 82px; height: 82px; }
.logo span { margin-top: -8px; font-family: "Liberation Serif", serif; font-weight: 700; font-size: 66px; line-height: 80px; color: #255357; }
.burger {
	width: 86px;
	height: 60px;
	border: 2px solid #595959;
	border-radius: 10px;
	display: flex;
	flex-direction: column;
	justify-content: center;
	align-items: center;
	gap: 8px;
}
.burger i { width: 34px; height: 5px; border-radius: 2px; background: #0a0c10; }

.socials { height: 34px; overflow: hidden; display: flex; align-items: flex-end; gap: 24px; padding-left: 133px; }
.social {
	width: 80px;
	height: 80px;
	flex: none;
	border-radius: 50%;
	background: #5a5c62;
	display: flex;
	justify-content: center;
	padding-top: 46px;
}
.social svg { width: 8px; height: 14px; }
.social .tw { width: 24px; }
.social .ig { width: 28px; }
.social .li { width: 30px; height: 14px; }

.foot-grid { display: grid; grid-template-columns: 720px 720px; margin: 68px 0 0 133px; }
.site h3 {
	display: inline-block;
	position: relative;
	margin: 0;
	font-size: 39px;
	line-height: 54px;
	font-weight: 700;
	letter-spacing: -.2px;
	color: #07090f;
}
.site h3::after {
	content: "";
	position: absolute;
	left: 0;
	bottom: -21px;
	width: 50%;
	height: 5px;
	border-radius: 3px;
	background: #28585c;
}
.site ul { margin: 38px 0 0; padding: 0; list-style: none; }
.site li { font-size: 32px; line-height: 72px; color: #222730; }

.contact { margin: 63px 0 0 133px; }
.c-row {
	height: 80px;
	display: flex;
	align-items: center;
	font-size: 32px;
	color: #222730;
}
.contact h3 { margin-bottom: 34px; }
.c-row svg { width: 32px; margin-right: 32px; }
.c-mail { height: 24px; }
.c-phone { height: 32px; }
.c-pin svg { width: 24px; height: 32px; margin-right: 33px; }

.foot-rule { margin: 80px 133px 0; height: 2px; background: #5c5c5c; }
.actions {
	height: 140px;
	margin-top: 41px;
	padding: 28px 133px 0;
	display: grid;
	grid-template-columns: 672px 672px;
	column-gap: 48px;
	background: #666;
	box-shadow: 0 -10px 20px rgba(0, 0, 0, .05);
}
.draft {
	height: 80px;
	margin-top: 4px;
	display: flex;
	align-items: center;
	justify-content: center;
	gap: 16px;
	color: #33355f;
	font-size: 32px;
	font-weight: 500;
}
.draft svg { width: 28px; height: 28px; }
.publish {
	height: 80px;
	display: flex;
	align-items: center;
	justify-content: center;
	gap: 14px;
	border-radius: 16px;
	padding-top: 3px;
	background: linear-gradient(90deg, #1e4449, #2a5257);
	border-bottom: 5px solid #33666b;
	box-shadow: 0 10px 20px rgba(0, 0, 0, .12);
	color: #6e8587;
	font-size: 32px;
	font-weight: 500;
}
.publish svg { width: 28px; height: 22px; }
.site-scroll { width: 20px; flex: none; padding-top: 1167px; }
.site-scroll i { width: 100%; height: 164px; border-radius: 10px; background: #1e4a50; }

/* alert */
.dialog {
	position: absolute;
	left: 1012px;
	top: 167px;
	width: 896px;
	height: 385px;
	padding: 42px 40px 0;
	border-radius: 24px;
	background: #1f1f1f;
	box-shadow: 0 8px 30px rgba(0, 0, 0, .4);
	color: #ebebeb;
}
.dialog h1 { margin: 0; font-size: 32px; line-height: 48px; font-weight: 600; letter-spacing: .1px; white-space: nowrap; }
.dialog p { margin: 17px 0 0; font-size: 26px; line-height: 40px; color: #e2e2e2; }
.dialog-foot { display: flex; justify-content: flex-end; margin-top: 30px; }
.ok {
	width: 128px;
	height: 72px;
	border: 0;
	border-radius: 36px;
	background: #b0c6f7;
	color: #0b2a6b;
	font-family: "Inter", sans-serif;
	font-size: 26px;
	font-weight: 600;
}
```
